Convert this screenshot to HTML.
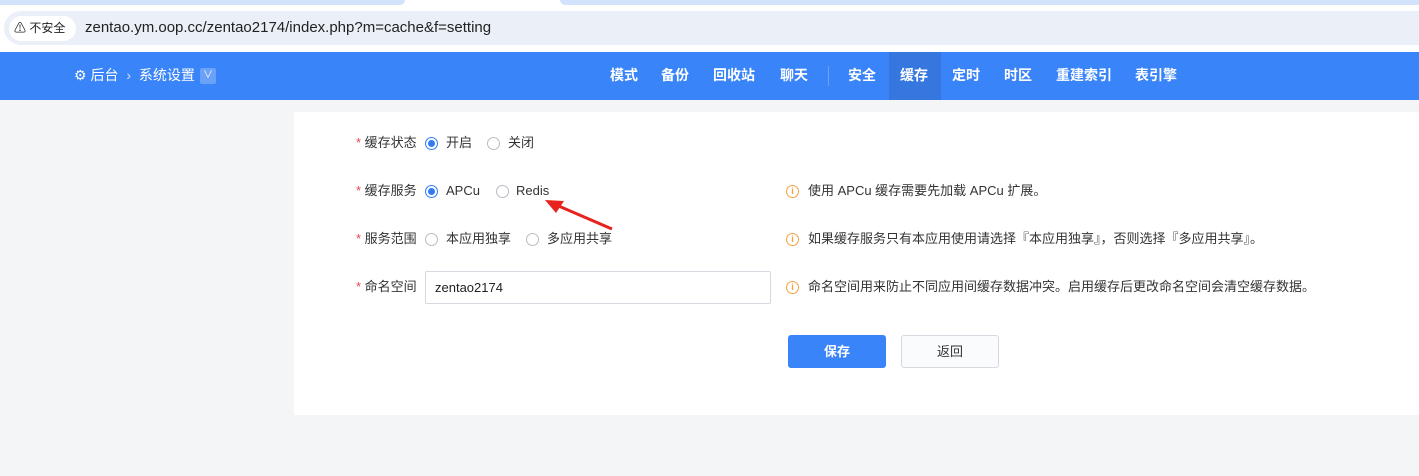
<!DOCTYPE html>
<html><head><meta charset="utf-8"><style>
*{margin:0;padding:0;box-sizing:border-box}
body{width:1419px;height:476px;overflow:hidden;background:#f4f5f7;font-family:"Liberation Sans","Noto Sans CJK SC",sans-serif;font-size:13px;color:#333;position:relative}
.a{position:absolute;white-space:nowrap;line-height:18px}
.radio{position:absolute;width:13px;height:13px;border:1px solid #b8bcc4;border-radius:50%;background:#fff}
.radio.on{border:1px solid #2f7cf6;background:#fff}
.radio.on:after{content:"";position:absolute;left:2px;top:2px;width:7px;height:7px;border-radius:50%;background:#2f7cf6}
.star{color:#e5484d}
.info{position:absolute;width:13px;height:13px;border:1.2px solid #f5a142;border-radius:50%;color:#f5a142;font-size:9px;line-height:11px;text-align:center;font-weight:bold}
.nav{position:absolute;top:66px;color:#fff;font-size:14px;font-weight:bold;line-height:18px}
</style></head><body>
<div class="a" style="left:0;top:0;width:1419px;height:52px;background:#fff"></div>
<div class="a" style="left:0;top:0;width:405px;height:5px;background:#d3e2fb;border-radius:0 0 6px 0"></div>
<div class="a" style="left:560px;top:0;width:859px;height:5px;background:#d3e2fb;border-radius:0 0 0 6px"></div>
<div class="a" style="left:4px;top:11px;width:1415px;height:34px;background:#ebeff7;border-radius:17px 0 0 17px"></div>
<div class="a" style="left:9px;top:16px;width:67px;height:25px;background:#fff;border-radius:13px"></div>
<div class="a" style="left:14px;top:19px;font-size:12px;color:#222">⚠ 不安全</div>
<div class="a" style="left:85px;top:19px;font-size:15px;color:#222">zentao.ym.oop.cc/zentao2174/index.php?m=cache&amp;f=setting</div>

<div class="a" style="left:0;top:52px;width:1419px;height:48px;background:#3a84f9"></div>
<div class="a" style="left:889px;top:52px;width:52px;height:48px;background:#3577de"></div>
<div class="a" style="left:828px;top:66px;width:1px;height:20px;background:#6ea2f8"></div>
<div class="a" style="left:74px;top:66px;color:#fff;font-size:14px">⚙ 后台 <span style="color:#cfe0fd;margin:0 4px">›</span> 系统设置</div>
<div class="a" style="left:200px;top:68px;width:16px;height:16px;background:#6aa2f9;border-radius:2px;color:#fff;font-size:10px;text-align:center;line-height:16px">∨</div>
<div class="nav" style="left:610px">模式</div>
<div class="nav" style="left:661px">备份</div>
<div class="nav" style="left:713px">回收站</div>
<div class="nav" style="left:780px">聊天</div>
<div class="nav" style="left:848px">安全</div>
<div class="nav" style="left:900px">缓存</div>
<div class="nav" style="left:952px">定时</div>
<div class="nav" style="left:1004px">时区</div>
<div class="nav" style="left:1056px">重建索引</div>
<div class="nav" style="left:1135px">表引擎</div>

<div class="a" style="left:294px;top:112px;width:1125px;height:303px;background:#fff"></div>

<div class="a" style="left:356px;top:134px"><span class="star">*</span> 缓存状态</div>
<div class="radio on" style="left:425px;top:137px"></div><div class="a" style="left:446px;top:134px">开启</div>
<div class="radio" style="left:487px;top:137px"></div><div class="a" style="left:508px;top:134px">关闭</div>

<div class="a" style="left:356px;top:182px"><span class="star">*</span> 缓存服务</div>
<div class="radio on" style="left:425px;top:185px"></div><div class="a" style="left:446px;top:182px">APCu</div>
<div class="radio" style="left:496px;top:185px"></div><div class="a" style="left:516px;top:182px">Redis</div>
<svg class="a" style="left:540px;top:195px" width="80" height="40"><line x1="72" y1="34" x2="14" y2="9" stroke="#e8231d" stroke-width="3"/><polygon points="5,5 24,6 16,18" fill="#e8231d"/></svg>

<div class="a" style="left:356px;top:230px"><span class="star">*</span> 服务范围</div>
<div class="radio" style="left:425px;top:233px"></div><div class="a" style="left:446px;top:230px">本应用独享</div>
<div class="radio" style="left:526px;top:233px"></div><div class="a" style="left:547px;top:230px">多应用共享</div>

<div class="a" style="left:356px;top:278px"><span class="star">*</span> 命名空间</div>
<div class="a" style="left:425px;top:271px;width:346px;height:33px;border:1px solid #d6d9e0;border-radius:2px;padding:7px 9px;color:#222">zentao2174</div>

<div class="info" style="left:786px;top:185px">i</div><div class="a" style="left:808px;top:182px">使用 APCu 缓存需要先加载 APCu 扩展。</div>
<div class="info" style="left:786px;top:233px">i</div><div class="a" style="left:808px;top:230px">如果缓存服务只有本应用使用请选择『本应用独享』，否则选择『多应用共享』。</div>
<div class="info" style="left:786px;top:281px">i</div><div class="a" style="left:808px;top:278px">命名空间用来防止不同应用间缓存数据冲突。启用缓存后更改命名空间会清空缓存数据。</div>

<div class="a" style="left:788px;top:335px;width:98px;height:33px;background:#3a84f9;border-radius:3px;color:#fff;text-align:center;line-height:33px;font-weight:bold">保存</div>
<div class="a" style="left:901px;top:335px;width:98px;height:33px;background:#fafbfd;border:1px solid #d6d9e0;border-radius:3px;text-align:center;line-height:31px">返回</div>
</body></html>
